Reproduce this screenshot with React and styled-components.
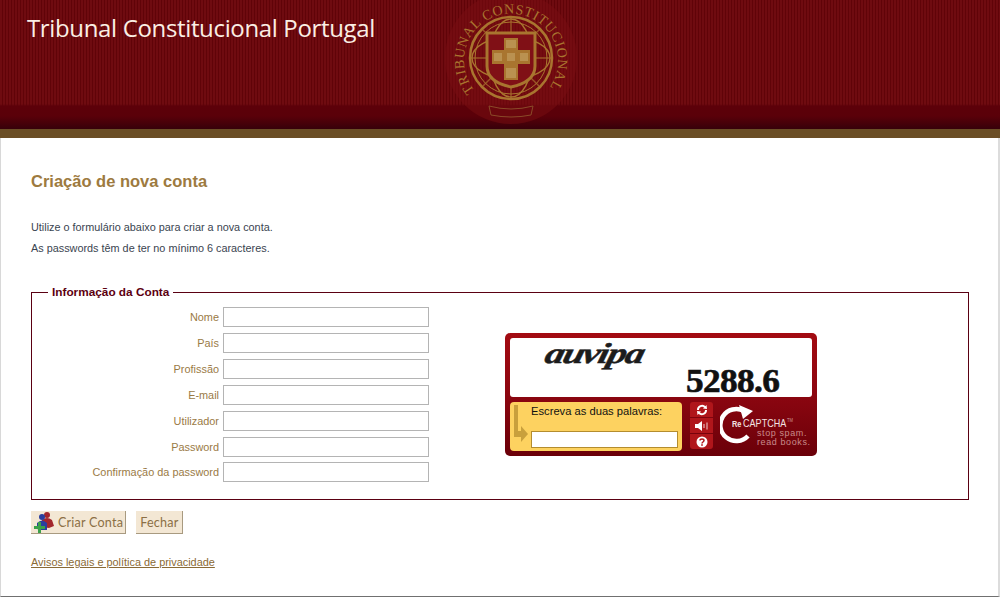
import React from "react";
import styled, { createGlobalStyle } from "styled-components";

const GlobalStyle = createGlobalStyle`
  html, body {
    margin: 0;
    padding: 0;
    background: #fff;
  }
  body {
    font-family: "Liberation Sans", Arial, sans-serif;
  }
`;

const Page = styled.div`
  width: 1000px;
  height: 597px;
  overflow: hidden;
  box-sizing: border-box;
  display: flex;
  flex-direction: column;
`;

const Banner = styled.header`
  position: relative;
  height: 129px;
  flex: none;
  padding: 13px 0 0 27px;
  box-sizing: border-box;
  background:
    linear-gradient(to bottom, rgba(80, 0, 8, 0) 0, rgba(80, 0, 8, 0) 104px, #5c0009 106px, #5a0009 116px, #37000a 129px),
    repeating-linear-gradient(to right, #6f0b10 0, #6f0b10 2px, #600308 2px, #600308 3px);
`;

const BannerTitle = styled.h1`
  margin: 0;
  font-family: "Open Sans", "Liberation Sans", sans-serif;
  font-weight: 400;
  font-size: 24px;
  line-height: 30px;
  letter-spacing: -0.35px;
  color: #fbeee4;
`;

const Emblem = styled.svg`
  position: absolute;
  left: 440px;
  top: -12px;
`;

const GoldBand = styled.div`
  height: 9px;
  flex: none;
  background: #6b4e26;
`;

const Content = styled.main`
  flex: 1;
  padding: 34px 29px 0 30px;
  border-left: 1px solid #d8d8d8;
  border-right: 2px solid #dcdcdc;
  border-bottom: 1px solid #707070;
  box-sizing: border-box;
  display: flex;
  flex-direction: column;
`;

const Heading = styled.h2`
  margin: 0 0 26px;
  font-size: 16.5px;
  line-height: 19px;
  font-weight: 700;
  color: #9d7a40;
`;

const Intro = styled.p`
  margin: 0;
  font-size: 10.85px;
  line-height: 21px;
  color: #3a4450;
`;

const AccountBox = styled.fieldset`
  margin: 26px 0 0;
  padding: 0;
  height: 215px;
  box-sizing: border-box;
  border: 1px solid #5a0012;
  display: flex;
  min-width: 0;
`;

const BoxLegend = styled.legend`
  margin-left: 16px;
  padding: 0 4px;
  font-size: 11.8px;
  line-height: 14px;
  font-weight: 700;
  color: #5c0010;
`;

const BoxBody = styled.div`
  display: flex;
  align-items: flex-start;
`;

const Fields = styled.div`
  width: 397px;
  flex: none;
  padding-top: 8px;
  display: flex;
  flex-direction: column;
  gap: 6px;
`;

const Row = styled.label`
  display: flex;
  justify-content: flex-end;
  align-items: center;
  gap: 4px;
  height: 20px;
  font-size: 10.9px;
  color: #9a7a45;

  &:last-child {
    margin-top: -1px;
  }
`;

const TextInput = styled.input`
  width: 206px;
  height: 20px;
  box-sizing: border-box;
  border: 1px solid #b4b4b4;
  background: #fff;
  padding: 0 2px;
  margin: 0;
`;

const Captcha = styled.div`
  margin: 34px 0 0 76px;
  width: 312px;
  height: 123px;
  box-sizing: border-box;
  padding: 5px;
  border-radius: 5px;
  background: linear-gradient(to bottom, #a30b12 0, #8c0610 50%, #6a0009 100%);
  display: flex;
  flex-direction: column;
  gap: 5px;
`;

const CaptchaImage = styled.div`
  position: relative;
  height: 59px;
  background: #fff;
  border-radius: 3px;
`;

const WordOne = styled.span`
  position: absolute;
  left: 36px;
  top: 0;
  font-family: "Liberation Serif", serif;
  font-style: italic;
  font-weight: 700;
  font-size: 29px;
  line-height: 30px;
  letter-spacing: -1.2px;
  color: #1c1c1c;
  -webkit-text-stroke: 0.5px #1c1c1c;
  transform: skewX(-14deg) scaleX(1.33);
  transform-origin: left center;
`;

const WordTwo = styled.span`
  position: absolute;
  left: 176px;
  top: 28px;
  font-family: "Liberation Serif", serif;
  font-weight: 700;
  font-size: 33px;
  line-height: 30px;
  letter-spacing: -0.6px;
  color: #111;
  -webkit-text-stroke: 0.6px #111;
  transform: scaleX(1.07);
  transform-origin: left center;
`;

const CaptchaBottom = styled.div`
  flex: 1;
  display: flex;
  min-height: 0;
`;

const AnswerPanel = styled.div`
  position: relative;
  width: 172px;
  height: 49px;
  box-sizing: border-box;
  padding: 3px 4px 3px 21px;
  border-radius: 4px;
  background: #fdd260;
  display: flex;
  flex-direction: column;
  justify-content: space-between;
  flex: none;
`;

const AnswerLabel = styled.span`
  font-size: 11.2px;
  line-height: 12px;
  color: #111;
`;

const AnswerInput = styled.input`
  width: 147px;
  height: 17px;
  box-sizing: border-box;
  border: 1px solid #b48d2e;
  background: #fff;
  margin: 0;
  padding: 0;
`;

const AnswerArrow = styled.svg`
  position: absolute;
  left: 3px;
  top: 1px;
`;

const ToolStack = styled.div`
  margin-left: 8px;
  width: 23px;
  height: 47px;
  border-radius: 3px;
  overflow: hidden;
  flex: none;
  display: flex;
  flex-direction: column;
  gap: 1px;
`;

const ToolButton = styled.div`
  flex: 1;
  background: #b0161b;
  display: flex;
  align-items: center;
  justify-content: center;
`;

const Brand = styled.div`
  position: relative;
  flex: 1;
`;

const BrandRing = styled.svg`
  position: absolute;
  left: 7px;
  top: 2px;
`;

const BrandName = styled.span`
  position: absolute;
  left: 19px;
  top: 15px;
  font-size: 11px;
  line-height: 12px;
  color: #f3e3e3;
  white-space: nowrap;
  transform: scaleX(0.82);
  transform-origin: left center;

  b {
    font-size: 9px;
    margin-right: 2px;
  }

  sup {
    font-size: 5px;
    line-height: 0;
    color: #c99;
    margin-left: 1px;
  }
`;

const BrandSlogan = styled.span`
  position: absolute;
  left: 44px;
  top: 27px;
  font-size: 9px;
  line-height: 9px;
  letter-spacing: 0.6px;
  font-weight: 400;
  color: #c98a8a;
  white-space: nowrap;
`;

const Actions = styled.div`
  margin-top: 11px;
  display: flex;
  gap: 10px;
`;

const Button = styled.button`
  height: 23px;
  margin: 0;
  padding: 0 ${(p) => (p.$icon ? "2px" : "4px")} 0 ${(p) => (p.$icon ? "1px" : "4px")};
  box-sizing: border-box;
  display: flex;
  align-items: center;
  gap: 2px;
  border: none;
  border-right: 1px solid #a89a80;
  border-bottom: 1px solid #a89a80;
  background: #f3e7d4;
  font-family: Lato, "Liberation Sans", sans-serif;
  font-size: 12.6px;
  letter-spacing: 0.2px;
  color: #8b6f45;
`;

const LegalLink = styled.a`
  margin-top: 22px;
  font-size: 10.9px;
  line-height: 12px;
  color: #8a6a35;
  text-decoration: underline;
  align-self: flex-start;
`;

const fields = ["Nome", "País", "Profissão", "E-mail", "Utilizador", "Password", "Confirmação da password"];

const App = () => {
  return (
    <Page>
      <GlobalStyle />
      <Banner>
        <BannerTitle>Tribunal Constitucional Portugal</BannerTitle>
        <Emblem width="140" height="140" viewBox="0 0 140 140">
          <defs>
            <path id="ringText" d="M 36 104 A 47 47 0 1 1 106 104" />
          </defs>
          <circle cx="71" cy="70" r="66" fill="#7a0d12" opacity="0.5" />
          <text fontFamily="Liberation Serif, serif" fontSize="14" fill="#a9752f">
            <textPath href="#ringText" textLength="208" lengthAdjust="spacing" startOffset="2">
              TRIBUNAL CONSTITUCIONAL
            </textPath>
          </text>
          <circle cx="71" cy="70" r="41" fill="none" stroke="#a9752f" strokeWidth="2.5" />
          <circle cx="71" cy="70" r="36" fill="none" stroke="#a9752f" strokeWidth="1" />
          <g stroke="#a9752f" strokeWidth="1.4" fill="none">
            <path d="M30 70 H112 M71 29 V111 M42 41 L100 99 M100 41 L42 99" opacity="0.7" />
            <ellipse cx="71" cy="70" rx="39" ry="21" />
            <ellipse cx="71" cy="70" rx="21" ry="39" />
          </g>
          <path d="M47 45 H95 V78 Q95 94 71 99 Q47 94 47 78 Z" fill="#801016" stroke="#a9752f" strokeWidth="3" />
          <path d="M64 50 H78 V92 H64 Z M52 62 H90 V76 H52 Z" fill="#a9752f" />
          <path d="M66 52 H76 V60 H66 Z M66 80 H76 V90 H66 Z M54 65 H62 V73 H54 Z M80 65 H88 V73 H80 Z M67 65 H75 V73 H67 Z" fill="#c7a468" opacity="0.6" />
          <path d="M49 118 Q71 124 93 118 L91 127 Q71 131 51 127 Z" fill="none" stroke="#8a4a28" strokeWidth="1" />
        </Emblem>
      </Banner>
      <GoldBand />
      <Content>
        <Heading>Criação de nova conta</Heading>
        <Intro>Utilize o formulário abaixo para criar a nova conta.</Intro>
        <Intro>As passwords têm de ter no mínimo 6 caracteres.</Intro>
        <AccountBox>
          <BoxLegend>Informação da Conta</BoxLegend>
          <BoxBody>
            <Fields>
              {fields.map((name) => (
                <Row key={name}>
                  {name}
                  <TextInput type={name === "Password" || name.startsWith("Conf") ? "password" : "text"} />
                </Row>
              ))}
            </Fields>
            <Captcha>
              <CaptchaImage>
                <WordOne>auvipa</WordOne>
                <WordTwo>5288.6</WordTwo>
              </CaptchaImage>
              <CaptchaBottom>
                <AnswerPanel>
                  <AnswerArrow width="16" height="44" viewBox="0 0 16 44">
                    <path d="M3 2 V32" stroke="#c9a03c" strokeWidth="4" fill="none" />
                    <path d="M1 28 H8 V23 L15 31 L8 39 V34 H1 Z" fill="#c9a03c" />
                  </AnswerArrow>
                  <AnswerLabel>Escreva as duas palavras:</AnswerLabel>
                  <AnswerInput type="text" />
                </AnswerPanel>
                <ToolStack>
                  <ToolButton>
                    <svg width="12" height="12" viewBox="0 0 12 12" fill="none" stroke="#fff" strokeWidth="2">
                      <path d="M2 6 A4 4 0 0 1 9 3.2" />
                      <path d="M10 6 A4 4 0 0 1 3 8.8" />
                      <path d="M7 4.5 L11 5 L10.5 1 Z M5 7.5 L1 7 L1.5 11 Z" fill="#fff" stroke="none" />
                    </svg>
                  </ToolButton>
                  <ToolButton>
                    <svg width="14" height="12" viewBox="0 0 14 12" fill="#fff">
                      <path d="M0 4 H3 L7 1 V11 L3 8 H0 Z" />
                      <path d="M9 4 V8 M12 2.5 V9.5" stroke="#fff" strokeWidth="1" opacity="0.8" />
                    </svg>
                  </ToolButton>
                  <ToolButton>
                    <svg width="12" height="12" viewBox="0 0 12 12">
                      <circle cx="6" cy="6" r="5.5" fill="#fff" />
                      <path d="M4 4.6 C4 2.4 8 2.4 8 4.6 C8 6 6 6 6 7.4" fill="none" stroke="#b0161b" strokeWidth="1.5" />
                      <rect x="5.2" y="8.2" width="1.6" height="1.6" fill="#b0161b" />
                    </svg>
                  </ToolButton>
                </ToolStack>
                <Brand>
                  <BrandRing width="36" height="40" viewBox="0 0 36 40" fill="none">
                    <path d="M28 32 A16 16 0 1 1 24 7" stroke="#fff" strokeWidth="4.5" />
                    <path d="M19 1 L33 7 L23 15 Z" fill="#fff" />
                  </BrandRing>
                  <BrandName>
                    <b>Re</b>CAPTCHA<sup>TM</sup>
                  </BrandName>
                  <BrandSlogan>
                    stop spam.
                    <br />
                    read books.
                  </BrandSlogan>
                </Brand>
              </CaptchaBottom>
            </Captcha>
          </BoxBody>
        </AccountBox>
        <Actions>
          <Button $icon type="button">
            <svg width="24" height="22" viewBox="0 0 24 22">
              <circle cx="15" cy="4" r="3" fill="#a3262c" />
              <path d="M10 16 V9 Q15 5 20 9 L22 15 L17 17 Z" fill="#a3262c" />
              <circle cx="10" cy="6" r="3" fill="#2b3f9e" />
              <path d="M5 18 V12 Q10 7 15 12 V19 H8 Z" fill="#2b3f9e" />
              <path d="M2 15 H6 V11 H9 V15 H13 V18 H9 V22 H6 V18 H2 Z" fill="#3aa14a" />
            </svg>
            Criar Conta
          </Button>
          <Button type="button">Fechar</Button>
        </Actions>
        <LegalLink href="#">Avisos legais e política de privacidade</LegalLink>
      </Content>
    </Page>
  );
};

export default App;
